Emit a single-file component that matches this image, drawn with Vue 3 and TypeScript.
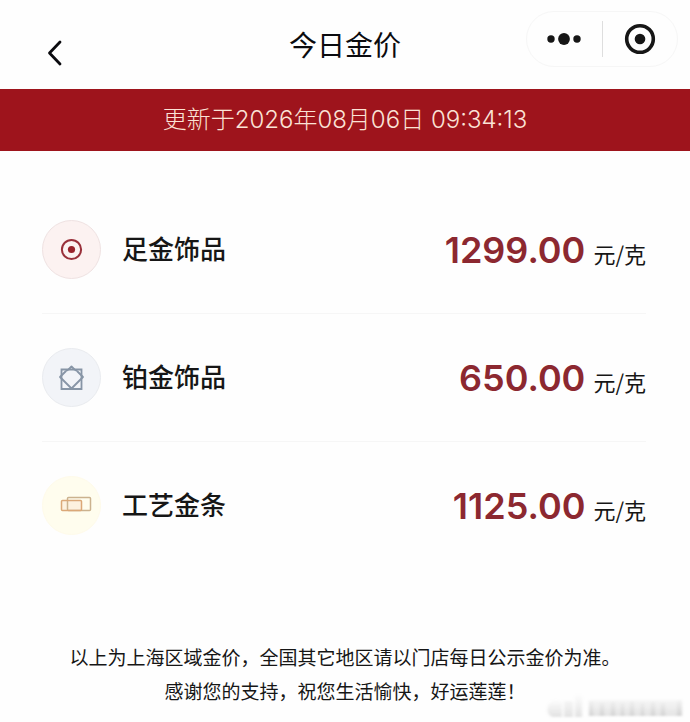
<script setup lang="ts">
interface PriceItem {
  id: 'gold' | 'platinum' | 'bar'
  name: string
  price: number
}

const updatedAt = '2026年08月06日 09:34:13'
const unit = '元/克'

const items: PriceItem[] = [
  { id: 'gold', name: '足金饰品', price: 1299 },
  { id: 'platinum', name: '铂金饰品', price: 650 },
  { id: 'bar', name: '工艺金条', price: 1125 },
]
</script>

<template>
  <div class="page">
    <header class="nav">
      <button class="back" type="button" aria-label="返回">
        <svg width="20" height="28" viewBox="0 0 20 28" fill="none">
          <path d="M16 3 5.500 14 16 25" stroke="#0b0b0f" stroke-width="2.8" stroke-linecap="round" stroke-linejoin="round" />
        </svg>
      </button>
      <h1 class="title">今日金价</h1>
      <div class="capsule">
        <button class="capsule-button" type="button" aria-label="更多">
          <svg width="36" height="14" viewBox="0 0 36 14" fill="#161616">
            <circle cx="5" cy="7" r="3.700" />
            <circle cx="18" cy="7" r="5.900" />
            <circle cx="31" cy="7" r="3.700" />
          </svg>
        </button>
        <button class="capsule-button" type="button" aria-label="关闭">
          <svg width="32" height="32" viewBox="0 0 32 32" fill="none">
            <circle cx="16" cy="16" r="13.300" stroke="#161616" stroke-width="3.600" />
            <circle cx="16" cy="16" r="5.300" fill="#161616" />
          </svg>
        </button>
      </div>
    </header>

    <p class="banner">更新于{{ updatedAt }}</p>

    <main class="content">
      <ul class="list">
        <li v-for="item in items" :key="item.id" class="row">
          <span class="badge" :class="item.id">
            <svg v-if="item.id === 'gold'" width="32" height="32" viewBox="0 0 32 32" fill="none">
              <circle cx="15.500" cy="15.500" r="9.600" stroke="#99303a" stroke-width="2" />
              <circle cx="15.500" cy="15.500" r="3.600" fill="#99242c" />
            </svg>
            <svg v-else-if="item.id === 'platinum'" width="32" height="32" viewBox="0 0 32 32" fill="none" stroke="#8795a6" stroke-width="1.800">
              <path d="M5.500 7.500H25.500V27H5.500Z" />
              <path d="M12.500 7.500 15.500 4.500 18.500 7.500 M21 9 27 15 15.500 26.500 4 15 10 9" stroke-linejoin="round" />
              <path d="M12.500 7.500 10 9M18.500 7.500 21 9" />
            </svg>
            <svg v-else width="40" height="32" viewBox="0 0 40 32" fill="none" stroke-width="1.500">
              <rect x="9.500" y="10.500" width="20" height="10" rx="1" fill="#fdf1df" />
              <rect x="15.500" y="7.500" width="23" height="13" rx="1" stroke="#cbb28e" />
              <rect x="9.500" y="10.500" width="20" height="10" rx="1" stroke="#dba878" />
            </svg>
          </span>
          <span class="name">{{ item.name }}</span>
          <span class="price"><strong class="amount">{{ item.price.toFixed(2) }}</strong><span class="unit">{{ unit }}</span></span>
        </li>
      </ul>
    </main>

    <footer class="notice">
      <p>以上为上海区域金价，全国其它地区请以门店每日公示金价为准。</p>
      <p>感谢您的支持，祝您生活愉快，好运莲莲！</p>
      <svg class="watermark" width="142" height="28" viewBox="0 0 142 28" aria-hidden="true">
        <defs>
          <linearGradient id="fade" x1="0" y1="0" x2="0" y2="1">
            <stop offset="0" stop-color="#b8b8b8" stop-opacity="0" />
            <stop offset="1" stop-color="#b8b8b8" stop-opacity="0.400" />
          </linearGradient>
          <filter id="soft" x="-10%" y="-20%" width="120%" height="140%">
            <feGaussianBlur stdDeviation="1.800 1" />
          </filter>
        </defs>
        <g fill="url(#fade)" filter="url(#soft)">
          <path d="M4 14Q10 3 18 10V25H8Q2 22 4 14Z" />
          <path d="M20 9H29V25H20ZM31 2H38V25H31ZM45 8H138V24H45Z" />
          <path d="M45 9H49V24H45ZM56 11H60V24H56ZM67 10H71V24H67ZM77 11H80V24H77ZM86 9H90V24H86ZM97 11H100V24H97ZM107 10H111V24H107ZM117 11H121V24H117ZM133 7H138V24H133Z" />
        </g>
      </svg>
    </footer>
  </div>
</template>

<style>
body {
  margin: 0;
  background: #fefefe;
}
</style>

<style scoped>
.page {
  font-family: Inter, "Noto Sans CJK SC", sans-serif;
  color: #161616;
}

.nav {
  display: grid;
  grid-template-columns: 1fr auto 1fr;
  align-items: center;
  box-sizing: border-box;
  height: 89px;
  padding: 0 12px;
}

button {
  display: flex;
  align-items: center;
  justify-content: center;
  padding: 0;
  border: 0;
  background: none;
  cursor: pointer;
}

.back {
  justify-self: start;
  padding: 16px 0 0 32px;
}

.title {
  margin: 0;
  padding-top: 2px;
  font-size: 28px;
  line-height: 40px;
  font-weight: 400;
  color: #0b0b0f;
}

.capsule {
  display: flex;
  align-items: center;
  justify-self: end;
  box-sizing: border-box;
  width: 152px;
  height: 56px;
  margin-bottom: 11px;
  border: 1px solid #f6f6f6;
  border-radius: 28px;
}

.capsule-button {
  flex: 1;
  height: 36px;
}

.capsule-button + .capsule-button {
  border-left: 1px solid #dedede;
}

.banner {
  margin: 0;
  padding: 13px 16px;
  background: #9e141c;
  color: #fbe3d6;
  font-size: 24px;
  line-height: 36px;
  font-weight: 300;
  text-align: center;
}

.content {
  padding: 35px 44px 0 42px;
}

.list {
  margin: 0;
  padding: 0;
  list-style: none;
}

.row {
  display: flex;
  align-items: center;
  height: 127px;
  border-bottom: 1px solid #f6f6f6;
}

.row:last-child {
  border-bottom: 0;
}

.badge {
  display: flex;
  align-items: center;
  justify-content: center;
  box-sizing: border-box;
  width: 59px;
  height: 59px;
  margin-right: 21px;
  border: 1px solid;
  border-radius: 50%;
}

.gold {
  background: #fcf2f1;
  border-color: #efe2e2;
}

.platinum {
  background: #f2f4f8;
  border-color: #e9ebef;
}

.bar {
  background: #fffdee;
  border-color: #fffbea;
}

.name {
  font-size: 26px;
  line-height: 40px;
  font-weight: 500;
}

.price {
  display: flex;
  align-items: baseline;
  gap: 8px;
  margin-left: auto;
}

.amount {
  color: #8c2830;
  font-size: 36px;
  line-height: 48px;
  font-weight: 600;
}

.unit {
  font-family: "Noto Sans CJK SC", sans-serif;
  font-size: 22px;
  line-height: 32px;
  font-weight: 400;
}

.notice {
  position: relative;
  padding: 73px 16px 12px;
  font-size: 19px;
  line-height: 34px;
  text-align: center;
}

.notice p {
  margin: 0;
}

.watermark {
  position: absolute;
  right: 4px;
  bottom: 2px;
}
</style>
